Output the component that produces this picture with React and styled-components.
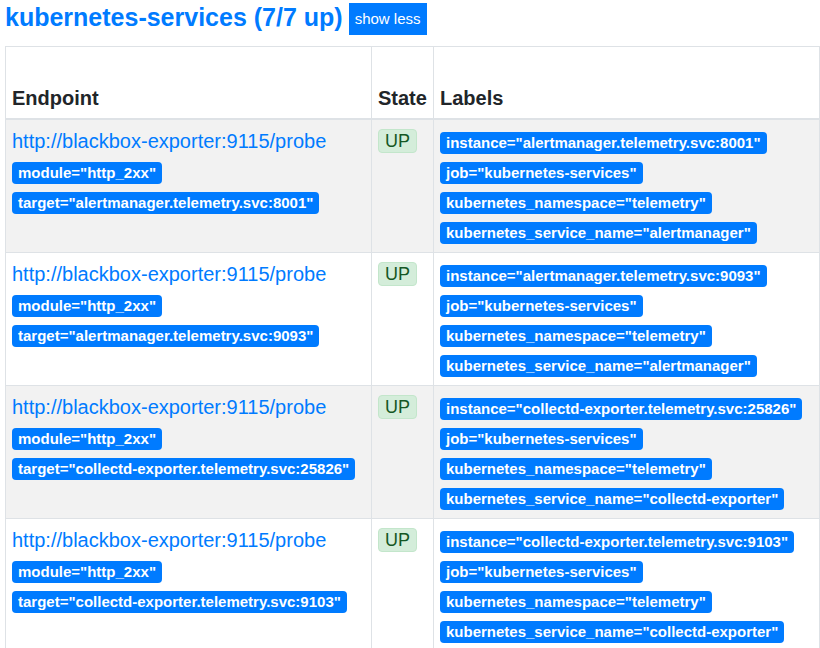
import React from "react";
import styled, { createGlobalStyle } from "styled-components";

const GlobalStyle = createGlobalStyle`
  body {
    margin: 0;
    background: #fff;
    font-family: "Liberation Sans", Arial, sans-serif;
    color: #212529;
  }
`;

const Page = styled.div`
  padding: 0 1px 0 5px;
`;

const TitleRow = styled.div`
  display: flex;
  align-items: flex-start;
  gap: 6px;
  padding-top: 3px;
  margin-bottom: 11px;
`;

const Title = styled.h2`
  margin: 0;
  font-size: 25px;
  line-height: 28px;
  font-weight: 700;
  color: #007bff;
`;

const ToggleButton = styled.button`
  height: 32px;
  padding: 0 6px;
  border: none;
  border-radius: 0;
  background: #007bff;
  color: #fff;
  font-family: inherit;
  font-size: 15px;
  line-height: 32px;
  cursor: pointer;
`;

const Table = styled.table`
  width: 814px;
  table-layout: fixed;
  border-collapse: collapse;
`;

const HeadCell = styled.th`
  height: 60px;
  padding: 6px 6px 5px;
  border: 1px solid #dee2e6;
  border-bottom: 2px solid #dee2e6;
  vertical-align: bottom;
  text-align: left;
  font-size: 20px;
  line-height: 30px;
  font-weight: 700;
`;

const Row = styled.tr`
  background: ${p => (p.striped ? "#f2f2f2" : "#fff")};
`;

const Cell = styled.td`
  height: 120px;
  padding: 6px;
  border: 1px solid #dee2e6;
  vertical-align: top;
`;

const Stack = styled.div`
  display: flex;
  flex-direction: column;
  align-items: flex-start;
`;

const EndpointLink = styled.a`
  color: #007bff;
  text-decoration: none;
  font-size: 20px;
  line-height: 31px;
  margin-bottom: -1px;
`;

const Label = styled.span`
  display: inline-block;
  margin: 6px 0 2px;
  padding: 3px 6px;
  border-radius: 4px;
  background: #007bff;
  color: #fff;
  font-size: 15px;
  line-height: 16px;
  font-weight: 700;
  white-space: nowrap;
`;

const StateBadge = styled.span`
  display: inline-block;
  margin-top: 3px;
  padding: 0 6px;
  border: 1px solid #c3e6cb;
  border-radius: 4px;
  background: #d4edda;
  color: #155724;
  font-size: 18px;
  line-height: 22px;
`;

const targets = [
  { svc: "alertmanager", port: "8001" },
  { svc: "alertmanager", port: "9093" },
  { svc: "collectd-exporter", port: "25826" },
  { svc: "collectd-exporter", port: "9103" },
];

const App = () => {
  return (
    <Page>
      <GlobalStyle />
      <TitleRow>
        <Title>kubernetes-services (7/7 up)</Title>
        <ToggleButton>show less</ToggleButton>
      </TitleRow>
      <Table>
        <colgroup>
          <col style={{ width: 366 }} />
          <col style={{ width: 62 }} />
          <col style={{ width: 386 }} />
        </colgroup>
        <thead>
          <tr>
            <HeadCell>Endpoint</HeadCell>
            <HeadCell>State</HeadCell>
            <HeadCell>Labels</HeadCell>
          </tr>
        </thead>
        <tbody>
          {targets.map((t, i) => {
            const host = `${t.svc}.telemetry.svc:${t.port}`;
            return (
              <Row key={i} striped={i % 2 === 0}>
                <Cell>
                  <Stack>
                    <EndpointLink href="#">
                      http://blackbox-exporter:9115/probe
                    </EndpointLink>
                    <Label>module="http_2xx"</Label>
                    <Label>target="{host}"</Label>
                  </Stack>
                </Cell>
                <Cell>
                  <StateBadge>UP</StateBadge>
                </Cell>
                <Cell>
                  <Stack>
                    <Label>instance="{host}"</Label>
                    <Label>job="kubernetes-services"</Label>
                    <Label>kubernetes_namespace="telemetry"</Label>
                    <Label>kubernetes_service_name="{t.svc}"</Label>
                  </Stack>
                </Cell>
              </Row>
            );
          })}
        </tbody>
      </Table>
    </Page>
  );
};

export default App;
